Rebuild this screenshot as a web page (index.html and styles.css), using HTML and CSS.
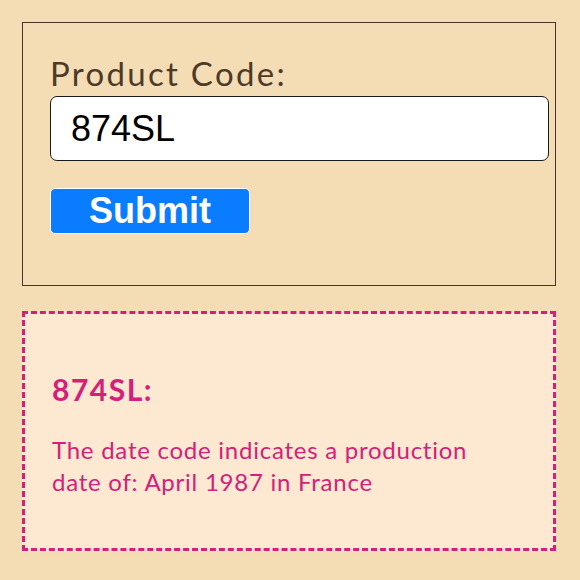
FILE: index.html
```html
<!DOCTYPE html>
<html>
<head>
	<title>Date Code Lookup</title>
	<link rel="stylesheet" href="styles.css">
</head>
<body>
	<main class="page">
		<form class="lookup">
			<label class="lookup-label" for="code">Product Code:</label>
			<input class="lookup-input" type="text" id="code" value="874SL">
			<button class="lookup-submit" type="button">Submit</button>
		</form>
		<section class="result">
			<h2 class="result-code">874SL:</h2>
			<p class="result-text">The date code indicates a production date of: April 1987 in France</p>
		</section>
	</main>
</body>
</html>
```

FILE: styles.css
```css
* {
	margin: 0;
	padding: 0;
	box-sizing: border-box;
}

body {
	font-family: "Lato", "Noto Sans", sans-serif;
	background: #f4ddb5;
}

.page {
	width: 534px;
	margin-left: 22px;
	padding-top: 22px;
	display: flex;
	flex-direction: column;
	gap: 25px;
}

/* lookup form */
.lookup {
	height: 264px;
	border: 1px solid #4a3623;
	padding: 31px 6px 0 27px;
	display: flex;
	flex-direction: column;
	align-items: flex-start;
}

.lookup-label {
	font-size: 33px;
	line-height: 38px;
	letter-spacing: 2.3px;
	color: #4d3a28;
}

.lookup-input {
	width: 100%;
	height: 65px;
	margin-top: 4px;
	padding: 0 20px;
	border: 1px solid #1a1a1a;
	border-radius: 7px;
	background: #fff;
	font-family: "Liberation Sans", Arial, sans-serif;
	font-size: 36px;
	color: #000;
}

.lookup-submit {
	width: 200px;
	height: 46px;
	margin-top: 27px;
	border: 1px solid #fff;
	border-radius: 5px;
	background: #0a7cff;
	color: #fff;
	font-family: "Liberation Sans", Arial, sans-serif;
	font-weight: 700;
	font-size: 36px;
	line-height: 1;
}

/* result panel */
.result {
	height: 240px;
	border: 3px dashed #d4207a;
	background: #fde9d1;
	padding: 56px 27px 0 27px;
	color: #d4207a;
}

.result-code {
	font-size: 30px;
	line-height: 38px;
	font-weight: 700;
	letter-spacing: 1.5px;
}

.result-text {
	max-width: 440px;
	margin-top: 26px;
	font-size: 24px;
	line-height: 32px;
	letter-spacing: 0.75px;
}
```
